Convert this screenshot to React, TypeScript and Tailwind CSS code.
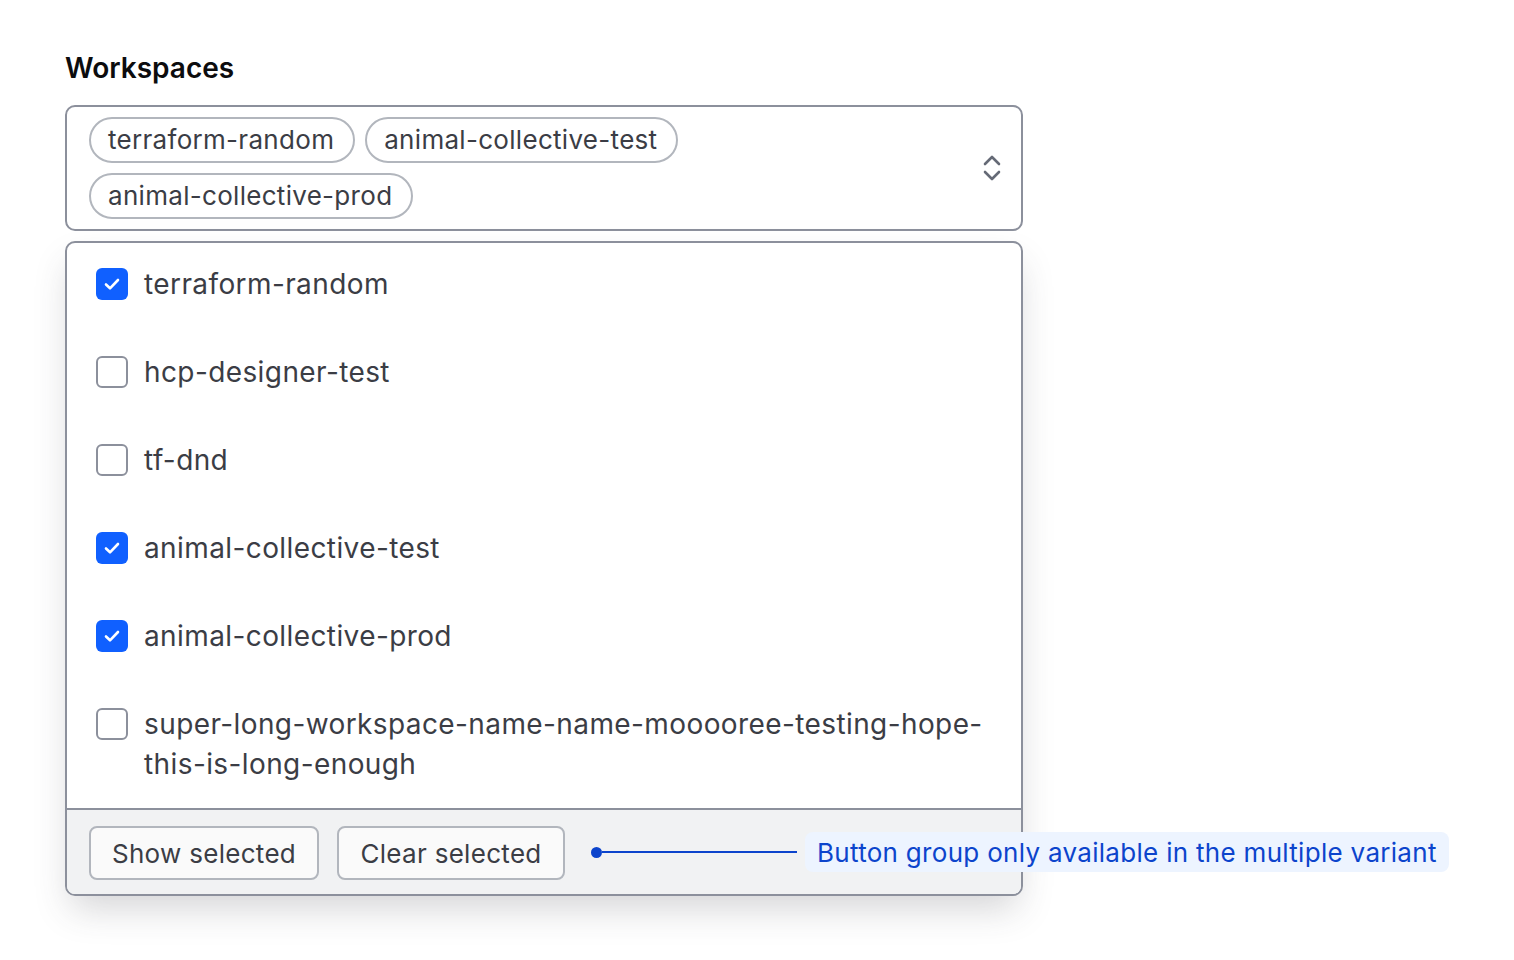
import React from "react";

const items = [
  { label: "terraform-random", checked: true },
  { label: "hcp-designer-test", checked: false },
  { label: "tf-dnd", checked: false },
  { label: "animal-collective-test", checked: true },
  { label: "animal-collective-prod", checked: true },
  { label: "super-long-workspace-name-name-mooooree-testing-hope-this-is-long-enough", checked: false },
];

function Checkbox({ checked }: { checked: boolean }) {
  if (checked) {
    return (
      <div className="mt-[4px] flex h-[32px] w-[32px] shrink-0 items-center justify-center rounded-[6px] bg-[#1060ff]">
        <svg width="20" height="20" viewBox="0 0 20 20" fill="none">
          <path d="M4 10.5l4 3.8L16 6" stroke="white" strokeWidth="2.6" strokeLinecap="round" strokeLinejoin="round" />
        </svg>
      </div>
    );
  }
  return <div className="mt-[4px] h-[32px] w-[32px] shrink-0 rounded-[6px] border-2 border-[#8c909c] bg-white" />;
}

function Tag({ children }: { children: React.ReactNode }) {
  return (
    <div className="flex h-[46px] items-center rounded-full border-2 border-[#b2b6bd] pl-[17px] pr-[19px] text-[26px] leading-none tracking-[0.3px] text-[#3b3d45]">
      {children}
    </div>
  );
}

export default function App() {
  return (
    <div
      className="min-h-[960px] bg-white pl-[65px] pt-[50px]"
      style={{ fontFamily: "Inter, 'Noto Sans', sans-serif" }}
    >
      <div className="relative w-[958px]">
        <div className="text-[28px] font-semibold leading-[36px] text-[#0c0c0e]">Workspaces</div>
        <div className="mt-[19px] flex items-center rounded-[10px] border-2 border-[#8c909c] bg-white py-[10px] pl-[22px] pr-[18px]">
          <div className="flex flex-1 flex-wrap gap-[10px]">
            <Tag>terraform-random</Tag>
            <Tag>animal-collective-test</Tag>
            <Tag>animal-collective-prod</Tag>
          </div>
          <svg width="22" height="30" viewBox="0 0 22 30" fill="none" className="shrink-0">
            <path d="M4 11l7-7 7 7" stroke="#656a76" strokeWidth="2.6" strokeLinecap="round" strokeLinejoin="round" />
            <path d="M4 19l7 7 7-7" stroke="#656a76" strokeWidth="2.6" strokeLinecap="round" strokeLinejoin="round" />
          </svg>
        </div>
        <div className="mt-[10px] overflow-hidden rounded-[10px] border-2 border-[#8c909c] bg-white shadow-[0_18px_36px_-6px_rgba(59,61,69,0.22)]">
          <div className="flex flex-col gap-[48px] pb-[24px] pl-[29px] pr-[26px] pt-[21px]">
            {items.map((it) => (
              <div key={it.label} className="flex items-start gap-[16px]">
                <Checkbox checked={it.checked} />
                <div className="min-w-0 flex-1 text-[28px] leading-[40px] tracking-[0.4px] text-[#3b3d45]">{it.label}</div>
              </div>
            ))}
          </div>
          <div className="flex gap-[18px] border-t-2 border-[#8c909c] bg-[#f1f2f3] pb-[14px] pl-[22px] pt-[16px]">
            <button className="h-[54px] w-[230px] rounded-[8px] border-2 border-[#b2b6bd] bg-[#fafafa] text-[26px] tracking-[0.3px] text-[#3b3d45]">
              Show selected
            </button>
            <button className="h-[54px] w-[228px] rounded-[8px] border-2 border-[#b2b6bd] bg-[#fafafa] text-[26px] tracking-[0.3px] text-[#3b3d45]">
              Clear selected
            </button>
          </div>
        </div>
        <div className="absolute left-[526px] top-[782px] flex items-center">
          <div className="h-[11px] w-[11px] rounded-full bg-[#0c44cc]" />
          <div className="h-[2px] w-[195px] bg-[#0c44cc]" />
          <div className="ml-[8px] flex h-[40px] w-[644px] items-center whitespace-nowrap rounded-[8px] bg-[#edf4ff] px-[12px] text-[26px] tracking-[0.3px] text-[#0c44cc]">
            Button group only available in the multiple variant
          </div>
        </div>
      </div>
    </div>
  );
}
